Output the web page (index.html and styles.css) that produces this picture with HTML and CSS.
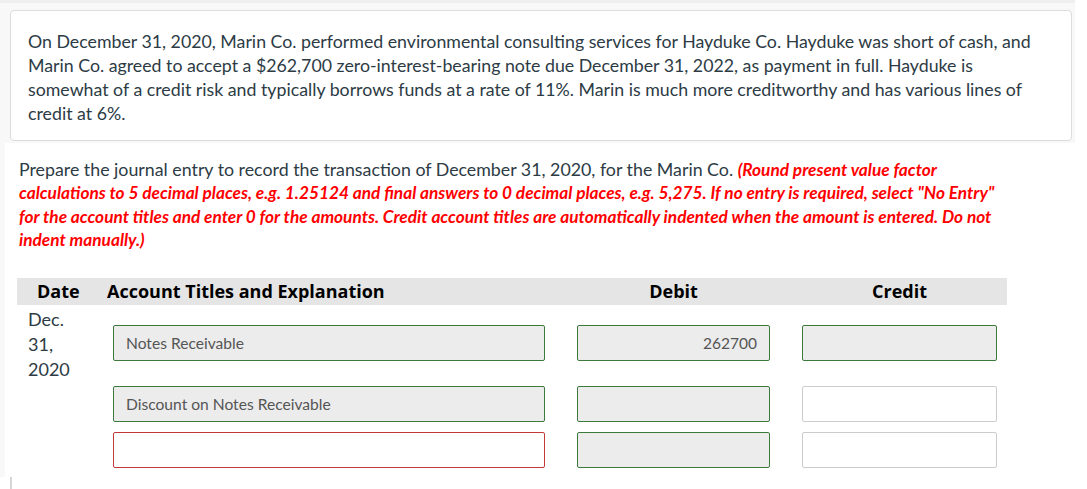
FILE: index.html
```html
<!DOCTYPE html>
<html>
<head>
<meta charset="utf-8">
<link rel="stylesheet" href="styles.css">
</head>
<body>
<div class="top">
  <div class="topband"></div>
  <div class="question">
    <p>On December 31, 2020, Marin Co. performed environmental consulting services for Hayduke Co. Hayduke was short of cash, and Marin Co. agreed to accept a $262,700 zero-interest-bearing note due December 31, 2022, as payment in full. Hayduke is somewhat of a credit risk and typically borrows funds at a rate of 11%. Marin is much more creditworthy and has various lines of credit at 6%.</p>
  </div>
</div>
<div class="main">
  <p class="instructions">Prepare the journal entry to record the transaction of December 31, 2020, for the Marin Co. <em class="warn">(Round present value factor<br>calculations to 5 decimal places, e.g. 1.25124 and final answers to 0 decimal places, e.g. 5,275. If no entry is required, select "No Entry"<br>for the account titles and enter 0 for the amounts. Credit account titles are automatically indented when the amount is entered. Do not<br>indent manually.)</em></p>

  <div class="journal">
    <div class="jhead">
      <div class="h-date">Date</div>
      <div class="h-acct">Account Titles and Explanation</div>
      <div class="h-num">Debit</div>
      <div class="h-num">Credit</div>
    </div>
    <div class="jrow first">
      <div class="date">Dec.<br>31,<br>2020</div>
      <div class="field filled ok">Notes Receivable</div>
      <div class="field filled ok num">262700</div>
      <div class="field filled ok num"></div>
    </div>
    <div class="jrow second">
      <div class="date"></div>
      <div class="field filled ok">Discount on Notes Receivable</div>
      <div class="field filled ok num"></div>
      <div class="field empty num"></div>
    </div>
    <div class="jrow third">
      <div class="date"></div>
      <div class="field empty bad"></div>
      <div class="field filled ok num"></div>
      <div class="field empty num"></div>
    </div>
  </div>
</div>
<div class="bottom"></div>
</body>
</html>
```

FILE: styles.css
```css
html, body {
  margin: 0;
  padding: 0;
  background: #ffffff;
}
body {
  font-family: Lato, "Open Sans", sans-serif;
  color: #2d3b45;
  width: 1087px;
  height: 489px;
  overflow: hidden;
}
.top {
  width: 1075px;
  background: #f8f8f8;
  padding-bottom: 2px;
}
.topband {
  height: 3px;
  background: #efefef;
}
.question {
  margin: 7px 3px 0 10px;
  background: #fff;
  border: 1px solid #dcdcdc;
  border-radius: 4px;
  padding: 18px 17px 15px 17px;
}
.question p {
  margin: 0;
  font-size: 17.75px;
  line-height: 24px;
}
.main {
  border-left: 5px solid #f8f8f8;
  background: #fff;
  height: 334px;
  padding-left: 14px;
  padding-top: 15px;
  box-sizing: border-box;
}
.instructions {
  margin: 0;
  font-size: 17.8px;
  line-height: 23.4px;
  width: 1040px;
  white-space: nowrap;
}
.warn {
  color: #ff0000;
  font-weight: 700;
  font-style: italic;
  font-size: 0.97em;
}
.journal {
  margin-top: 26px;
  margin-left: -2px;
  width: 990px;
}
.jhead {
  display: grid;
  grid-template-columns: 64px 432px 193px 195px;
  column-gap: 32px;
  background: #e5e5e5;
  height: 27px;
  align-items: center;
  font-family: "Open Sans", sans-serif;
  font-weight: 700;
  font-size: 18px;
  color: #000;
}
.h-date { padding-left: 20px; }
.h-acct { margin-left: -6px; }
.h-num { text-align: center; }
.jrow {
  display: grid;
  grid-template-columns: 64px 432px 193px 195px;
  column-gap: 32px;
  align-items: start;
}
.jrow.first { padding-top: 2px; }
.jrow.first .field { margin-top: 18px; }
.jrow.second { margin-top: 4px; }
.jrow.third { margin-top: 10px; }
.date {
  padding-left: 11px;
  font-size: 18px;
  line-height: 25px;
}
.field {
  height: 36px;
  box-sizing: border-box;
  border-radius: 2px;
  font-size: 15.6px;
  color: #555;
  display: flex;
  align-items: center;
  padding: 0 12px;
}
.field.num { justify-content: flex-end; font-size: 15.5px; }
.filled { background: #ececec; }
.empty { background: #fff; border: 1px solid #cccccc; }
.ok { border: 1px solid #3c7a3c; }
.bad { border: 1px solid #c23a3a; }
.bottom {
  margin-left: 10px;
  border-left: 2px solid #d6d6d6;
  height: 12px;
}
```
